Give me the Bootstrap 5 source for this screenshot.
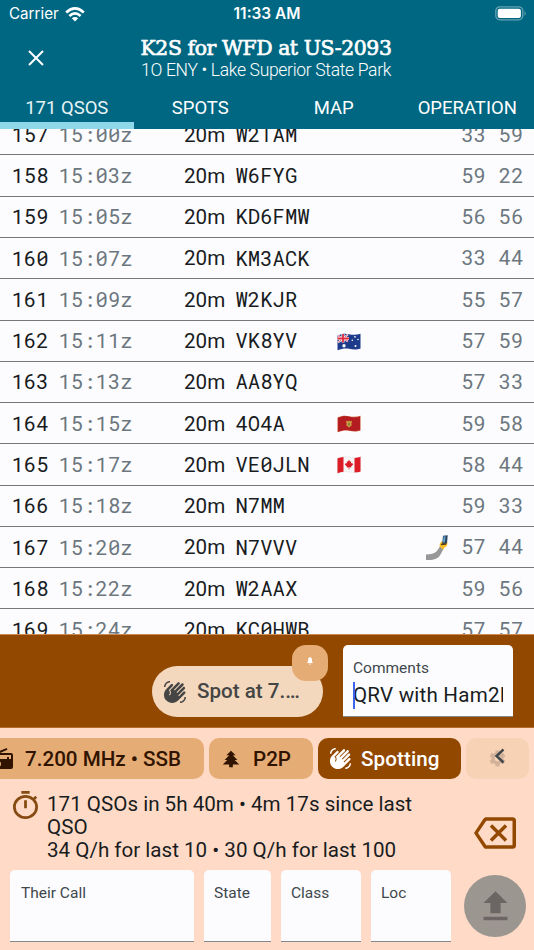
<!DOCTYPE html>
<html lang="en">
<head>
<meta charset="utf-8">
<meta name="viewport" content="width=device-width, initial-scale=1">
<title>K2S for WFD at US-2093</title>
<link href="https://cdn.jsdelivr.net/npm/bootstrap@5.3.0/dist/css/bootstrap.min.css" rel="stylesheet">
<style>
body{width:534px;height:950px;overflow:hidden;font-family:Roboto,"Liberation Sans",sans-serif;background:#fcfcff;color:#191c1e;line-height:1.2}
svg{display:block;flex:none}
.app-head{background:#006782;height:129px;color:#fff}
.status{height:28px;font:500 15.4px/28px Inter,sans-serif}
.status>.side{width:217px}
.carrier{font-weight:400;font-size:15.2px;padding-left:9px}
.title-row{height:64px}
.op-title{font:500 20.4px/24px "Roboto Slab","DejaVu Serif",serif;letter-spacing:-.42px;white-space:nowrap;-webkit-text-stroke:.7px #fff}
.op-sub{font-weight:300;font-size:17.55px;letter-spacing:-.33px;line-height:20px;white-space:nowrap}
.tabs{height:37px}
.tabs>a{width:133.5px;font-size:18.5px;line-height:33px;height:37px;color:#e8f3f6;text-align:center;text-decoration:none;border-bottom:7px solid transparent}
.tabs>a.active{border-color:#8fd8e9}
.log{height:505px;margin-top:0;overflow:hidden}
.log-list{margin-top:-14.8px}
.qso{height:41.27px;border-bottom:1px solid #75797c;font-size:20.6px;line-height:41px;white-space:nowrap;padding:1.7px 0 0 11.5px}
.qso>*{flex:none}
.num,.time,.call{font-family:"Roboto Mono","DejaVu Sans Mono",monospace;margin-top:-1.6px}
.num{width:47px}
.time{color:#6c777e;width:125.500px}
.band{width:51.5px}
.call{width:101.500px}
.flag{width:88px}
.note{width:36.500px}
.rst{color:#6c777e;letter-spacing:.8px;width:37.3px}
.spot{background:#934800;height:94px;border-top:1px solid #c98a54;border-bottom:1px solid #b26c30;padding:10px 21px 0 152px}
.spot-btn{width:171px;height:51px;margin-top:21px;border-radius:26px;background:#f3d8be;color:#454545;font-size:20.6px;font-weight:500;padding-left:11px}
.spot-badge{width:36px;height:36px;border-radius:14px;background:#e6ac75;right:-5px;top:-21px}
.field{background:#fcfcff;border-radius:5px 5px 0 0;border-bottom:1px solid #84888a;color:#40484c;font-size:15.5px;white-space:nowrap;overflow:hidden}
.comments{width:170px;height:72px;padding:14px 10px 0}
.comments .value{font-size:20.6px;letter-spacing:.2px;line-height:27px;color:#191c1e;overflow:hidden;margin-top:4px}
.caret{left:0;top:0;width:2px;height:27px;background:#3e63ee}
.entry{background:#ffdbc7;height:222px}
.chips{padding-top:10px;gap:5px;margin-left:-21px}
.chip{height:41px;border-radius:10px;background:#e6ac75;color:#301400;font-size:20.6px;font-weight:500;white-space:nowrap}
.chip.on{background:#934800;color:#fff}
.chip.more{background:#f8d2b4}
.stats{height:78px;padding:14px 15px 0 13px;font-size:20.6px;line-height:23.1px}
.inputs{gap:10px;padding-left:10px}
.inputs .field{height:72px;padding:14px 11px}
.send{width:62px;height:62px;border-radius:50%;background:#9c9691;margin:5px 0 0 3px}
</style>
</head>
<body class="d-flex flex-column">
<svg width="0" height="0" class="position-absolute"><defs>
<symbol id="wave" viewBox="0 0 24 24"><path fill="currentColor" d="M23 17C23 20.31 20.31 23 17 23V21.5C19.5 21.5 21.5 19.5 21.5 17H23M1 7C1 3.69 3.69 1 7 1V2.5C4.5 2.5 2.5 4.5 2.5 7H1M8 4.32L3.41 8.92C.19 12.14 .19 17.37 3.41 20.59S11.86 23.81 15.08 20.59L22.15 13.5C22.64 13.03 22.64 12.24 22.15 11.75C21.66 11.26 20.87 11.26 20.38 11.75L15.96 16.17L15.25 15.46L21.79 8.92C22.28 8.43 22.28 7.64 21.79 7.15S20.5 6.66 20 7.15L14.19 13L13.5 12.27L20.37 5.38C20.86 4.89 20.86 4.1 20.37 3.61S19.09 3.12 18.6 3.61L11.71 10.5L11 9.8L16.5 4.32C17 3.83 17 3.04 16.5 2.55S15.22 2.06 14.73 2.55L7.11 10.17C8.33 11.74 8.22 14 6.78 15.45L6.07 14.74C7.24 13.57 7.24 11.67 6.07 10.5L5.72 10.15L9.79 6.08C10.28 5.59 10.28 4.8 9.79 4.31C9.29 3.83 8.5 3.83 8 4.32Z"/></symbol>
<symbol id="au" viewBox="0 0 24 18"><path fill="#1d3b8b" d="M.5 2.5C5 .5 8 .3 12 1.2S20 2 23.500.8V15.500C19 17 16 16.500 12 15.800S5 15.800.5 17.200Z"/><path fill="none" stroke="#fff" stroke-width="1.700" d="M1 2.500 11 8.500M11 1.500 1 9.500"/><path fill="none" stroke="#e33a4c" stroke-width=".7" d="M1 2.500 11 8.500M11 1.500 1 9.500"/><path stroke="#fff" stroke-width="3" d="M6 1V9.500M.5 5.500H12"/><path stroke="#df2a40" stroke-width="1.800" d="M6 1V9.500M.5 5.500H12"/><g fill="#fff"><circle cx="7" cy="12.800" r="1.700"/><circle cx="18" cy="3.800" r=".9"/><circle cx="15.300" cy="7.300" r=".8"/><circle cx="21" cy="6.500" r=".8"/><circle cx="18.500" cy="13" r="1"/></g></symbol>
<symbol id="me" viewBox="0 0 24 18"><path fill="#c9502e" d="M.5 2.500C5 .5 8 .3 12 1.200S20 2 23.500.8V15.500C19 17 16 16.500 12 15.800S5 15.800.5 17.200Z"/><path fill="#b31d22" d="M1.100 3C5 1.200 8 1 12 1.800S20 2.600 23 1.700V15.100C19 16.400 16 15.900 12 15.200S5 15.200 1.100 16.400Z"/><path fill="#d0a040" d="M12 5.200 12.800 6.500 15 5.800 14.400 9 14.600 10.800 13 11.500 12 12.700 11 11.500 9.400 10.800 9.600 9 9 5.800 11.200 6.500Z"/><path fill="#587a50" d="M11.300 8h1.400v2.500h-1.400z"/></symbol>
<symbol id="ca" viewBox="0 0 24 18"><path fill="#f7f5f5" stroke="#ccc" stroke-width=".3" d="M.5 2.500C5 .5 8 .3 12 1.200S20 2 23.500.8V15.500C19 17 16 16.500 12 15.800S5 15.800.5 17.200Z"/><path fill="#dc1d28" d="M.5 2.500C3 1.500 4.500 1.100 6.500 1V15.800C4 16 2.500 16.500.5 17.200ZM17.500 1.900C20 1.900 21.500 1.500 23.500.8V15.500C21.500 16.200 20 16.400 17.500 16.400ZM12 3.700 13.200 5.700 14.200 5.300 13.900 7.500 15.500 6.700 15.400 7.800 16.300 8.300 14 10.700 14.200 11.600 12.300 11.300V13.500H11.700V11.300L9.800 11.600 10 10.700 7.700 8.300 8.600 7.800 8.500 6.700 10.100 7.500 9.800 5.300 10.800 5.700Z"/></symbol>
<symbol id="selfie" viewBox="0 0 24 26"><path fill="#989899" d="M1 19.500C6 19.300 9.500 18.500 11.500 16.500L15 11.500 18.500 13.500C16.500 18 14.500 22.500 11 23.700 8 25 4 25 1 25Z"/><path fill="#f8bf26" d="M14.500 11.500C14.500 8 16 6 18.500 6L22.300 7.500C23 10 21.500 12 19.500 12.500L18.500 14.500Z"/><path fill="#2d465f" d="M18 .8 22.700.3 22 8.500 17.200 9Z"/><path fill="#63a6cf" d="M18.600 1.500 20.500 1.300 19.900 7.200 18 7.500Z"/><path stroke="#543f22" stroke-width="1.500" d="m16 9.500 5-.5"/></symbol>
</defs></svg>

<header class="app-head flex-shrink-0">
  <div class="status d-flex">
    <div class="side carrier d-flex align-items-center">Carrier
      <svg style="margin-left:6px" width="20" height="15" viewBox="0 0 20 15" fill="none" stroke="#fff" stroke-width="2.700"><path d="M1.200 5.400Q10-2.500 18.800 5.400M4.400 8.900Q10 4 15.600 8.900"/><path fill="#fff" stroke="none" d="M6.800 11.300Q10 8.500 13.200 11.300L10 14.500Z"/></svg>
    </div>
    <div class="text-center fw-semibold flex-fill">11:33 AM</div>
    <div class="side d-flex justify-content-end align-items-center pe-1"><svg style="margin-right:3px;margin-top:-2px" width="32" height="15" viewBox="0 0 32 15"><rect x=".8" y=".8" width="27" height="13" rx="4" fill="none" stroke="#65a3b3" stroke-width="1.300"/><rect x="2.700" y="2.700" width="23.200" height="9.300" rx="2" fill="#fff"/><path fill="#65a3b3" d="M29.500 5Q32 7.500 29.500 10Z"/></svg></div>
  </div>
  <div class="title-row d-flex">
    <div style="width:72px" class="d-flex justify-content-center align-items-center flex-shrink-0 pb-1"><svg width="16" height="16" viewBox="0 0 16 16" stroke="#fff" stroke-width="2"><path d="M1 1 15 15M15 1 1 15"/></svg></div>
    <div class="flex-fill text-center pt-2" style="margin-right:74px"><div class="op-title">K2S for WFD at US-2093</div><div class="op-sub">1O ENY • Lake Superior State Park</div></div>
  </div>
  <nav class="tabs d-flex"><a class="active">171 QSOS</a><a>SPOTS</a><a>MAP</a><a>OPERATION</a></nav>
</header>

<main class="log flex-shrink-0"><div class="log-list" id="log"></div></main>

<section class="spot d-flex justify-content-between flex-shrink-0">
  <div class="spot-btn position-relative d-flex align-items-center gap-2">
    <svg width="24" height="24"><use href="#wave"/></svg><span style="padding-left:2px">Spot at 7.…</span>
    <span class="spot-badge position-absolute d-flex align-items-center justify-content-center" style="padding-bottom:4px"><svg width="6" height="8" viewBox="0 0 6 8"><path fill="#fff" d="M3 0C5 .8 5 2 5 4.500L6 6H0L1 4.500C1 2 1 .8 3 0M2.300 6.500h1.500v1h-1.500z"/></svg></span>
  </div>
  <div class="field comments"><div>Comments</div><div class="value position-relative"><span class="caret position-absolute"></span>QRV with Ham2K PoLo</div></div>
</section>

<section class="entry flex-shrink-0">
  <div class="chips d-flex">
    <div class="chip d-flex align-items-center" style="width:225px;padding-left:12px"><svg width="24" height="24" viewBox="0 0 24 24"><path fill="currentColor" d="M20,6A2,2 0 0,1 22,8V20A2,2 0 0,1 20,22H4A2,2 0 0,1 2,20V8C2,7.150 2.530,6.420 3.280,6.130L15.710,1L16.470,2.830L8.830,6H20M20,8H4V12H16V10H18V12H20V8M7,14A3,3 0 0,0 4,17A3,3 0 0,0 7,20A3,3 0 0,0 10,17A3,3 0 0,0 7,14Z"/></svg><span style="padding-left:10px;padding-top:1px">7.200 MHz • SSB</span></div>
    <div class="chip d-flex align-items-center" style="width:104px;padding-left:11px"><svg width="22" height="22" viewBox="0 0 24 24"><path fill="currentColor" d="M10,21V18H3L8,13H5L10,8H7L12,3L17,8H14L19,13H16L21,18H14V21H10Z"/></svg><span style="padding-left:11px;padding-top:1px">P2P</span></div>
    <div class="chip on d-flex align-items-center" style="width:143px;padding-left:11px"><svg width="23" height="23"><use href="#wave"/></svg><span style="padding-left:9px;padding-top:1px;letter-spacing:.1px">Spotting</span></div>
    <div class="chip more d-flex align-items-center justify-content-center position-relative" style="width:63px"><svg width="19" height="19" viewBox="0 0 24 24"><path fill="#d3b29b" d="M12,15.500A3.500,3.500 0 0,1 8.500,12A3.500,3.500 0 0,1 12,8.500A3.500,3.500 0 0,1 15.500,12A3.500,3.500 0 0,1 12,15.500M19.430,12.970C19.470,12.650 19.500,12.330 19.500,12C19.500,11.670 19.470,11.340 19.430,11L21.540,9.370C21.730,9.220 21.780,8.950 21.660,8.730L19.660,5.270C19.540,5.050 19.270,4.960 19.050,5.050L16.560,6.050C16.040,5.660 15.500,5.320 14.870,5.070L14.500,2.420C14.460,2.180 14.250,2 14,2H10C9.750,2 9.540,2.180 9.500,2.420L9.130,5.070C8.500,5.320 7.960,5.660 7.440,6.050L4.950,5.050C4.730,4.960 4.460,5.050 4.340,5.270L2.340,8.730C2.210,8.950 2.270,9.220 2.460,9.370L4.570,11C4.530,11.340 4.500,11.670 4.500,12C4.500,12.330 4.530,12.650 4.570,12.970L2.460,14.630C2.270,14.780 2.210,15.050 2.340,15.270L4.340,18.730C4.460,18.950 4.730,19.030 4.950,18.950L7.440,17.940C7.960,18.340 8.500,18.680 9.130,18.930L9.500,21.580C9.540,21.820 9.750,22 10,22H14C14.250,22 14.460,21.820 14.500,21.580L14.870,18.930C15.500,18.670 16.040,18.340 16.560,17.940L19.050,18.950C19.270,19.030 19.540,18.950 19.660,18.730L21.660,15.270C21.780,15.050 21.730,14.780 21.540,14.630L19.430,12.970Z"/></svg><svg class="position-absolute" style="left:28px;top:10px" width="11" height="16" viewBox="0 0 11 16"><path fill="none" stroke="#40484c" stroke-width="2.400" d="M9.500 1.500 2.500 8 9.500 14.500"/></svg></div>
  </div>
  <div class="stats d-flex">
    <svg width="25" height="28" viewBox="3 1 18 21" preserveAspectRatio="none" style="margin-top:-2px"><path fill="#864b13" d="M12,20A7,7 0 0,1 5,13A7,7 0 0,1 12,6A7,7 0 0,1 19,13A7,7 0 0,1 12,20M19.030,7.390L20.450,5.970C20,5.460 19.550,5 19.040,4.560L17.620,6C16.070,4.740 14.120,4 12,4A9,9 0 0,0 3,13A9,9 0 0,0 12,22C17,22 21,17.970 21,13C21,10.880 20.260,8.930 19.030,7.390M11,14H13V8H11M15,1H9V3H15V1Z"/></svg>
    <div style="width:400px;padding-left:9px">171 QSOs in 5h 40m • 4m 17s since last QSO<br>34 Q/h for last 10 • 30 Q/h for last 100</div>
    <svg class="ms-auto" style="margin-top:19px;margin-right:3px" width="42" height="42" viewBox="0 0 24 24"><path fill="#934800" d="M19,15.590L17.590,17L14,13.410L10.410,17L9,15.590L12.590,12L9,8.410L10.410,7L14,10.590L17.590,7L19,8.410L15.410,12L19,15.590M22,3A2,2 0 0,1 24,5V19A2,2 0 0,1 22,21H7C6.310,21 5.770,20.640 5.410,20.110L0,12L5.410,3.880C5.770,3.350 6.310,3 7,3H22M22,5H7L2.280,12L7,19H22V5Z"/></svg>
  </div>
  <div class="inputs d-flex" style="padding-top:13px">
    <div class="field" style="width:184px">Their Call</div>
    <div class="field" style="width:67px;padding-left:10px">State</div>
    <div class="field" style="width:80px;padding-left:10px">Class</div>
    <div class="field" style="width:80px;padding-left:10px">Loc</div>
    <div class="send d-flex align-items-center justify-content-center"><svg width="41" height="41" viewBox="0 0 24 24"><path fill="#6b6663" d="M9,16V10H5L12,3L19,10H15V16H9M5,20V18H19V20H5Z"/></svg></div>
  </div>
</section>

<script src="https://cdn.jsdelivr.net/npm/bootstrap@5.3.0/dist/js/bootstrap.bundle.min.js"></script>
<script>
const contacts = [
  [157,'15:00','W2TAM','','',33,59],[158,'15:03','W6FYG','','',59,22],[159,'15:05','KD6FMW','','',56,56],
  [160,'15:07','KM3ACK','','',33,44],[161,'15:09','W2KJR','','',55,57],[162,'15:11','VK8YV','au','',57,59],
  [163,'15:13','AA8YQ','','',57,33],[164,'15:15','4O4A','me','',59,58],[165,'15:17','VE0JLN','ca','',58,44],
  [166,'15:18','N7MM','','',59,33],[167,'15:20','N7VVV','','selfie',57,44],[168,'15:22','W2AAX','','',59,56],
  [169,'15:24','KC0HWB','','',57,57]];
const icon = (id, w, h) => id ? `<svg width="${w}" height="${h}"><use href="#${id}"/></svg>` : '';
document.getElementById('log').innerHTML = contacts.map(([n, t, call, flag, note, sent, rcvd]) => `
  <div class="qso d-flex align-items-center">
    <span class="num">${n}</span><span class="time">${t}z</span>
    <span class="band">20m</span><span class="call">${call}</span>
    <span class="flag">${icon(flag, 24, 18)}</span><span class="note">${icon(note, 24, 26)}</span>
    <span class="rst">${sent}</span><span class="rst">${rcvd}</span>
  </div>`).join('');
</script>
</body>
</html>
